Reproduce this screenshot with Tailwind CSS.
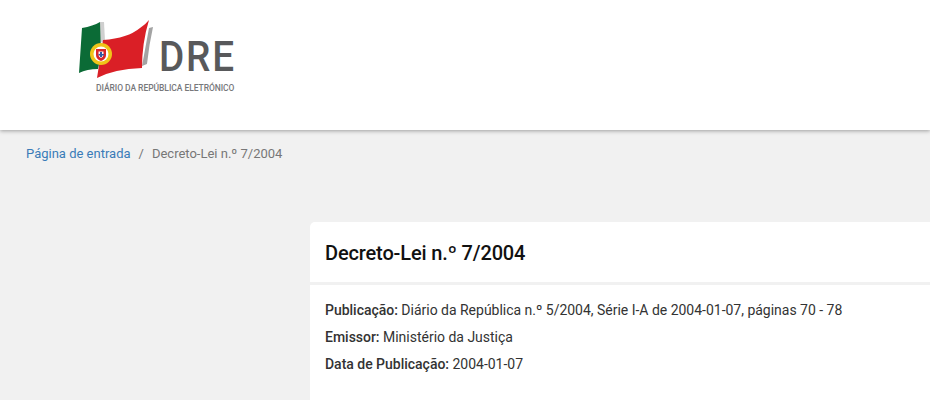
<!DOCTYPE html>
<html lang="pt">
  <head>
    <meta charset="UTF-8" />
    <script src="https://cdn.jsdelivr.net/npm/@tailwindcss/browser@4"></script>
    <title>Decreto-Lei n.º 7/2004</title>
  </head>
  <body class="h-[400px] overflow-hidden bg-[#f1f1f1] font-['Roboto',sans-serif]">
    <header class="h-[130px] bg-white shadow-[0_1px_4px_rgba(0,0,0,0.35)] relative pl-[78px] pt-[19px]">
      <div class="w-[160px]">
        <div class="flex items-start h-[60px]">
          <svg width="80" height="60" viewBox="0 0 80 60" class="shrink-0">
            <path d="M71 9 L75 8 Q71 26 69 45 L64 47 Z" fill="#a3a3a3" />
            <path d="M22 3 L26 3 L27 22 L22 24 Z" fill="#cfcfcf" />
            <path d="M4 9 Q15 7 22 3 L23 36 L20 50 Q9 50 1 54 Z" fill="#0b6b36" />
            <path d="M25 21 Q50 19 62 9 Q68 5 71 1 Q64 24 64 49 Q36 50 19 59 Z" fill="#da1f26" />
            <circle cx="23" cy="35" r="11" fill="#f0c419" />
            <circle cx="23" cy="35" r="7.500" fill="#fff" />
            <path d="M18 30 H28 V36 Q28 40 23 42 Q18 40 18 36 Z" fill="#d8262c" />
            <path d="M20.500 32.500 H25.500 V36 Q25.500 38 23 39 Q20.500 38 20.500 36 Z" fill="#f4f4f4" />
            <path d="M22 33 H24 V35 H26 V36.500 H24 V38 H22 V36.500 H20.500 V35 H22 Z" fill="#2f5aa8" />
          </svg>
          <span class="mt-[16px] ml-[1px] text-[43px] leading-[43px] font-medium tracking-[2px] scale-x-[0.9] origin-left text-[#58595b]">DRE</span>
        </div>
        <div class="mt-[3px] ml-[18px] whitespace-nowrap text-[8.500px] leading-[12px] text-[#77787b] font-medium tracking-[-0.05px]">DIÁRIO DA REPÚBLICA ELETRÓNICO</div>
      </div>
    </header>

    <nav class="flex pl-[26px] pt-[15px] text-[13px] leading-[18px]">
      <a href="#" class="text-[#3a7cb8]">Página de entrada</a>
      <span class="px-[8px] text-[#777]">/</span>
      <span class="text-[#777]">Decreto-Lei n.º 7/2004</span>
    </nav>

    <main class="ml-[310px] mt-[59px]">
      <div class="h-[60px] bg-white rounded-tl-[5px] pl-[15px] pt-[1px] flex items-center">
        <h1 class="text-[20px] font-medium text-[#111] tracking-[-0.14px]">Decreto-Lei n.º 7/2004</h1>
      </div>
      <div class="mt-[3px] h-[115px] bg-white pl-[15px] pt-[12px] text-[14px] leading-[27px] text-[#333] tracking-[-0.015px]">
        <p><b class="font-medium">Publicação:</b> Diário da República n.º 5/2004, Série I-A de 2004-01-07, páginas 70 - 78</p>
        <p><b class="font-medium">Emissor:</b> Ministério da Justiça</p>
        <p><b class="font-medium">Data de Publicação:</b> 2004-01-07</p>
      </div>
    </main>
  </body>
</html>
